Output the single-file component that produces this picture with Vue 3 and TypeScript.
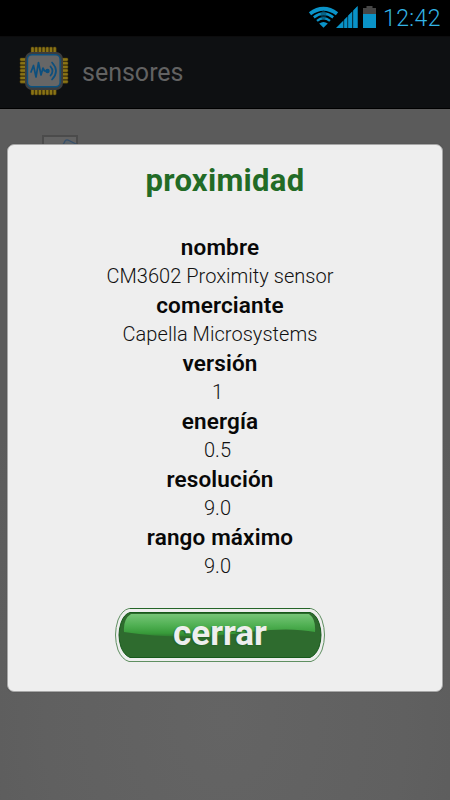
<script setup lang="ts">
interface Detail {
  label: string
  value: string
  short?: boolean
}

const details: Detail[] = [
  { label: 'nombre', value: 'CM3602 Proximity sensor' },
  { label: 'comerciante', value: 'Capella Microsystems' },
  { label: 'versión', value: '1', short: true },
  { label: 'energía', value: '0.5', short: true },
  { label: 'resolución', value: '9.0', short: true },
  { label: 'rango máximo', value: '9.0', short: true },
]

const pins = [0, 1, 2, 3, 4, 5, 6]
</script>

<template>
  <div class="screen">
    <header class="status">
      <svg class="status-icons" width="70" height="24" viewBox="308 6 70 24">
        <g fill="none" stroke="#0a93c8">
          <path d="M310 13.800Q323.500 3.800 337 13.800" stroke-width="3.800" />
          <path d="M313.800 17.400Q323.500 10 333.200 17.400" stroke-width="2.600" />
          <path d="M317 20.900Q323.500 15.600 330 20.900" stroke-width="2.400" />
        </g>
        <path d="M319.200 23.600Q323.500 20.400 327.800 23.600L323.500 27.800Z" fill="#0a93c8" />
        <path d="M320.500 13.500L323.500 10L326.500 13.500L325 20H322Z" fill="#064d69" opacity=".65" />
        <path d="M336 28L343.200 20.800V28ZM344.200 28V19.800L347.200 16.800V28ZM348.200 28V15.600L352 11.800V28ZM353.200 28V10.600L357.600 6V28Z" fill="#0a93c8" />
        <path d="M343 28V21L358 6V28Z" fill="#0a93c8" opacity=".35" />
        <path d="M363 14V8H366.500V6H372.500V8H376V14Z" fill="#464646" />
        <path d="M363 14H376V28H363Z" fill="#0a93c8" />
      </svg>
      <span class="clock">12:42</span>
    </header>
    <div class="bar">
      <svg class="logo" width="50" height="50" viewBox="0 0 50 50">
        <g fill="#8a7416" stroke="#4c3c0a" stroke-width=".5">
          <template v-for="p in pins" :key="p">
            <rect :x="12 + p * 3.7" y="1" width="3" height="48" rx="1" />
            <rect x="1" :y="12 + p * 3.7" width="48" height="3" rx="1" />
          </template>
        </g>
        <rect x="6" y="6" width="38" height="38" rx="7" fill="#3b3d3f" />
        <rect x="8.500" y="8.800" width="32.600" height="32" rx="4.500" fill="#666" stroke="#0c5280" stroke-width="1.400" />
        <g fill="none" stroke="#0c4f7e" stroke-linecap="round" stroke-linejoin="round">
          <path d="M12 26L14.500 19.500L17 31L19.500 16.500L22 29L24 22L25.500 25H28" stroke-width="1.700" />
          <path d="M31.500 20.500Q35.500 25 31.500 29.500M33 16.500Q41 25 33 33.500" stroke-width="1.700" />
        </g>
        <circle cx="28.500" cy="25" r="2.200" fill="#0c4f7e" />
      </svg>
      <span class="app-name">sensores</span>
    </div>
    <main class="content">
      <svg class="thumb" width="36" height="12" viewBox="0 0 36 12">
        <path d="M1 12V1H35V12" fill="#626262" stroke="#4b4b4b" stroke-width="2" />
        <path d="M20 12L23 6Q24.500 4 27 5.500L35 9.500" fill="#5b6268" stroke="#354f6b" stroke-width="1.300" />
      </svg>
      <section class="dialog">
        <h1 class="title">proximidad</h1>
        <dl class="details">
          <template v-for="d in details" :key="d.label">
            <dt>{{ d.label }}</dt>
            <dd :class="{ short: d.short }">{{ d.value }}</dd>
          </template>
        </dl>
        <button class="close" type="button">
          <svg class="close-art" width="212" height="56" viewBox="0 0 212 56">
            <defs>
              <linearGradient id="gloss" x1="0" y1="0" x2="0" y2="1">
                <stop offset="0" stop-color="#76c577" />
                <stop offset=".5" stop-color="#50b053" />
                <stop offset=".85" stop-color="#389b3a" />
                <stop offset="1" stop-color="#2e7d30" />
              </linearGradient>
            </defs>
            <path d="M15 1.500H197Q204 3 208 13Q213 28 208 43Q204 52.500 197 54.500H15Q8 52.500 4 43Q-1 28 4 13Q8 3 15 1.500Z" fill="#eee" stroke="#5f8f61" />
            <path d="M16 1.500H196" stroke="#246527" />
            <path d="M16 5.500H196Q202 7 205 16Q209 28 205 40Q202 48 196 50.500H16Q10 48 7 40Q3 28 7 16Q10 7 16 5.500Z" fill="#2e6b2e" stroke="#16591a" />
            <path d="M17 7H195Q202 12 201 25Q175 20 136 25Q70 34 10 25Q9 12 17 7Z" fill="url(#gloss)" />
          </svg>
          <span class="close-label">cerrar</span>
        </button>
      </section>
    </main>
  </div>
</template>

<style>
body {
  margin: 0;
}
</style>

<style scoped>
.screen {
  width: 450px;
  height: 800px;
  overflow: hidden;
  display: flex;
  flex-direction: column;
  background: #000;
  font-family: Roboto, 'Liberation Sans', sans-serif;
}
.status {
  height: 36px;
  box-sizing: border-box;
  padding-right: 9px;
  display: flex;
  justify-content: flex-end;
  background: #000;
}
.status-icons {
  margin-top: 6px;
}
.clock {
  width: 58px;
  margin-left: 5px;
  line-height: 37px;
  font-size: 23px;
  font-weight: 350;
  letter-spacing: 0.4px;
  color: #33b5e5;
  white-space: nowrap;
}
.bar {
  height: 73px;
  box-sizing: border-box;
  border-bottom: 1px solid #000;
  border-top: 1px solid #0c0c0d;
  padding-left: 19px;
  display: flex;
  align-items: center;
  background: #0e1012;
}
.logo {
  margin-top: -3px;
}
.app-name {
  margin: 0 0 0 13px;
  font-size: 25px;
  letter-spacing: 0;
  color: #626262;
}
.content {
  flex: 1;
  display: flex;
  flex-direction: column;
  align-items: center;
  background: radial-gradient(ellipse 300px 420px at 50% 88%, #646464 0%, #606060 60%, #5b5b5b 100%);
}
.thumb {
  align-self: flex-start;
  margin: 26px 0 0 42px;
}
.dialog {
  width: 436px;
  height: 548px;
  margin-top: -3px;
  box-sizing: border-box;
  border: 1px solid #a6a6a6;
  border-radius: 7px;
  background: #eee;
  box-shadow: 0 0 1px #444;
  display: flex;
  flex-direction: column;
  align-items: center;
}
.title {
  margin: 17px 0 0;
  font-size: 31px;
  line-height: 38px;
  font-weight: 700;
  letter-spacing: 0.3px;
  color: #226b26;
}
.details {
  width: 424px;
  margin: 32px 10px 0 0;
  text-align: center;
  color: #111;
}
dt,
dd {
  margin: 0;
  height: 29px;
}
dt {
  font-size: 22.5px;
  line-height: 31px;
  font-weight: 600;
  letter-spacing: 0.15px;
  color: #080808;
}
dd {
  font-size: 20px;
  line-height: 30px;
  font-weight: 300;
  letter-spacing: 0.04px;
}
dd.short {
  padding-right: 5px;
}
.close {
  width: 212px;
  height: 56px;
  margin-top: 27px;
  margin-right: 10px;
  padding: 0;
  border: 0;
  background: none;
  display: grid;
  font-family: inherit;
}
.close-art,
.close-label {
  grid-area: 1 / 1;
}
.close-label {
  text-align: center;
  line-height: 54px;
  font-size: 35px;
  font-weight: 700;
  color: #eee;
  text-shadow: -1px 1px 1px #236426;
}
</style>
